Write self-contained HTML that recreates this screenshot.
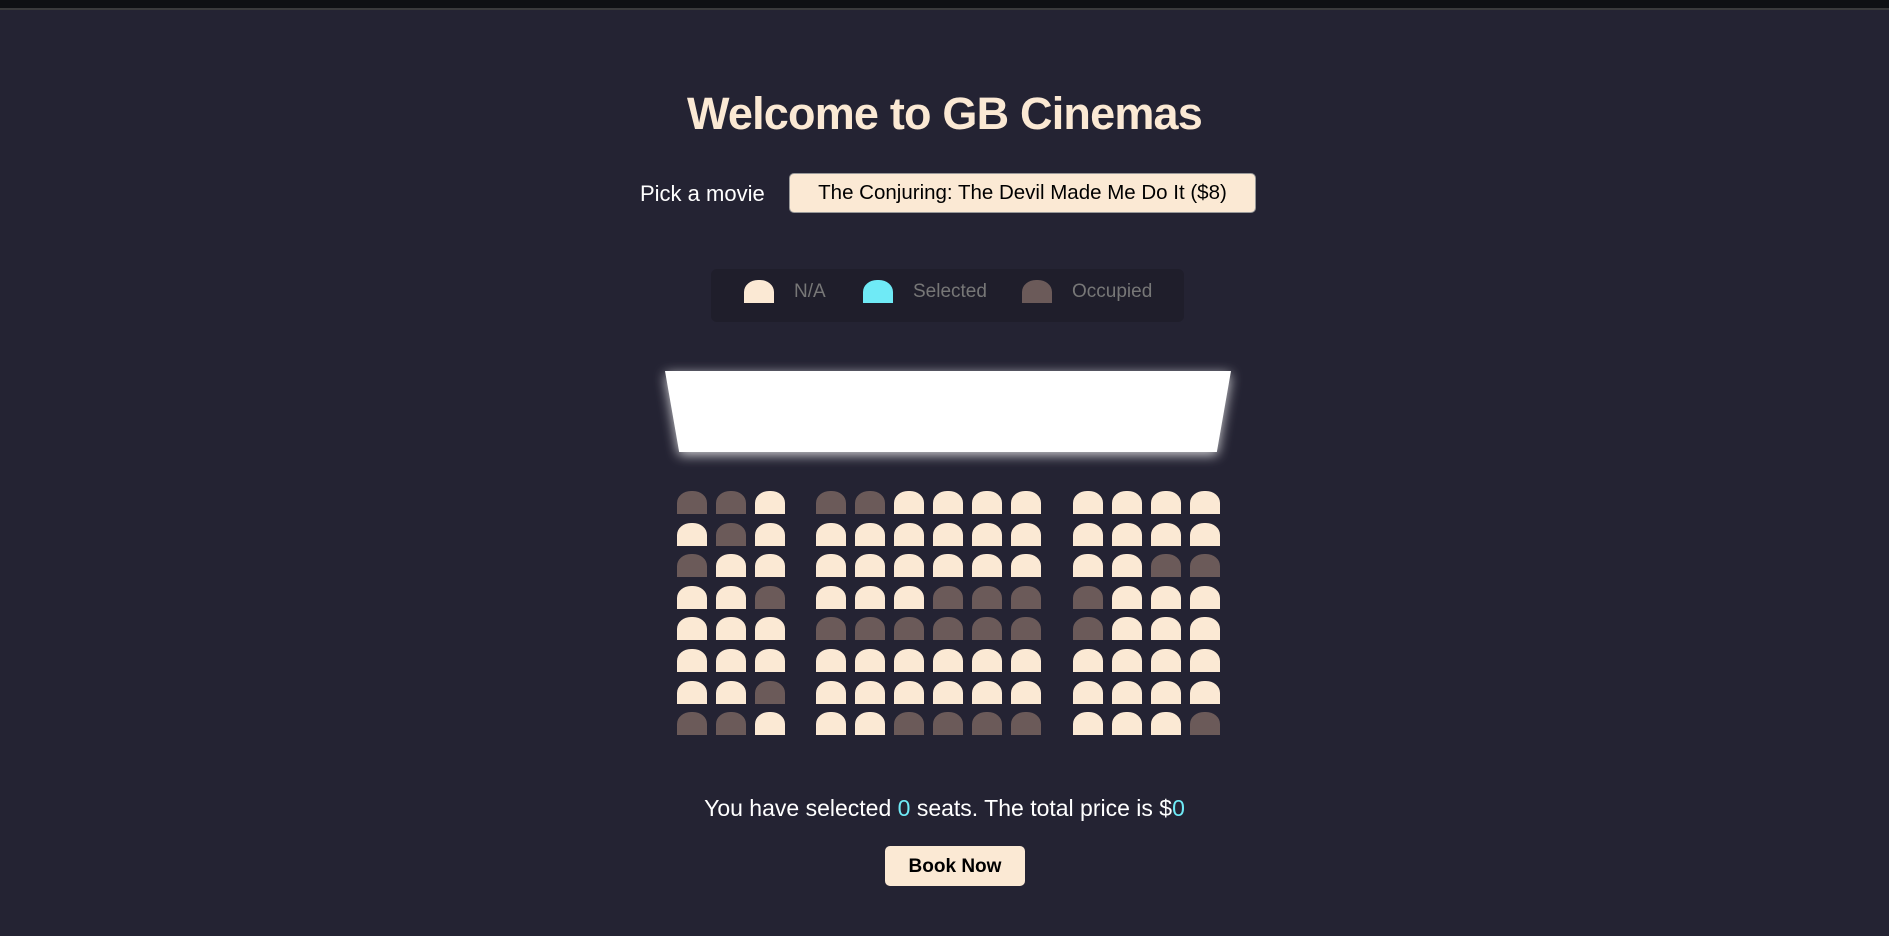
<!DOCTYPE html>
<html><head><meta charset="utf-8"><style>
*{margin:0;padding:0;box-sizing:border-box}
body{width:1889px;height:936px;background:#242333;overflow:hidden;position:relative;font-family:"Liberation Sans",sans-serif;color:#fff}
.top{position:absolute;left:0;top:0;width:1889px;height:10px;background:#0f1014;border-bottom:2px solid #3a3a3c}
h1{position:absolute;left:0;width:1889px;top:88px;text-align:center;font-size:45px;font-weight:bold;color:#fbe9d4;letter-spacing:-0.8px}
.pick{position:absolute;left:640px;top:181px;font-size:22px}
.sel{position:absolute;left:789px;top:173px;width:467px;height:40px;background:#fbe9d4;border:1px solid #999;border-radius:5px;color:#000;font-size:20.5px;line-height:38px;text-align:center}
.legend{position:absolute;left:711px;top:269px;width:473px;height:53px;background:#1f1e2b;border-radius:6px}
.s{position:absolute;width:30px;height:23px;border-radius:14px 14px 0 0/12px 12px 0 0;background:#fbe9d4}
.o{background:#6b5a59}.c{background:#6feaf6}
.lt{position:absolute;top:281px;font-size:19px;color:#777}
.sw{position:absolute;left:655px;top:361px;width:586px;height:101px;filter:drop-shadow(0 3px 6px rgba(255,255,255,0.8))}
.screen{position:absolute;left:10px;top:10px;width:566px;height:81px;background:#fff;clip-path:polygon(0 0,100% 0,97.5% 100%,2.5% 100%)}
.info{position:absolute;left:0;width:1889px;top:795px;text-align:center;font-size:23px}
.info b{font-weight:normal;color:#6feaf6}
.btn{position:absolute;left:885px;top:846px;width:140px;height:40px;background:#fbe9d4;border-radius:5px;color:#000;font-weight:bold;font-size:19px;line-height:41px;text-align:center}
</style></head><body>
<div class="top"></div>
<h1>Welcome to GB Cinemas</h1>
<div class="pick">Pick a movie</div>
<div class="sel">The Conjuring: The Devil Made Me Do It ($8)</div>
<div class="legend"></div>
<div class="s" style="left:744px;top:280px"></div><div class="lt" style="left:794px">N/A</div>
<div class="s c" style="left:863px;top:280px"></div><div class="lt" style="left:913px">Selected</div>
<div class="s o" style="left:1022px;top:280px"></div><div class="lt" style="left:1072px">Occupied</div>
<div class="sw"><div class="screen"></div></div>
<div id="seats"></div>
<div class="info">You have selected <b>0</b> seats. The total price is $<b>0</b></div>
<div class="btn">Book Now</div>
<script>
var cols=[677,716,755,816,855,894,933,972,1011,1073,1112,1151,1190];
var map=["OO.OO........",".O...........","O..........OO","..O...OOOO...","...OOOOOOO...",".............","..O..........","OO...OOOO...O"];
var h="";
for(var r=0;r<8;r++){var y=491+Math.round(r*31.6);
for(var c=0;c<13;c++){h+='<div class="s'+(map[r][c]=="O"?" o":"")+'" style="left:'+cols[c]+'px;top:'+y+'px"></div>';}}
document.getElementById("seats").innerHTML=h;
</script>
</body></html>
